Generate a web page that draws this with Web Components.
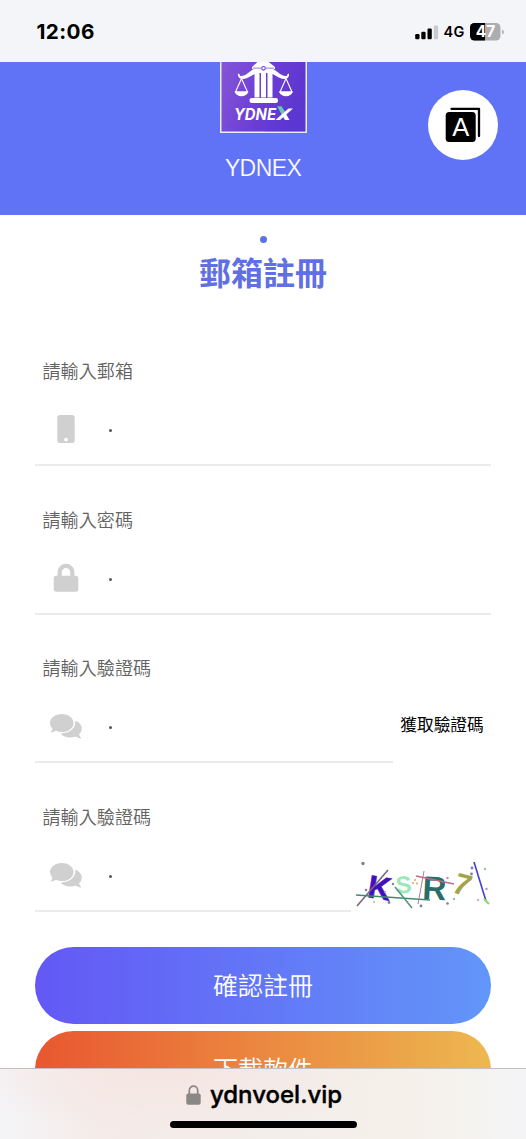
<!DOCTYPE html>
<html lang="zh-Hant">
<head>
<meta charset="utf-8">
<title>YDNEX</title>
<style>
html,body{margin:0;height:100%;background:#fff}
body{overflow:hidden;font-family:"Liberation Sans","Noto Sans CJK TC",sans-serif}
</style>
</head>
<body>
<sign-up-page></sign-up-page>
<script>
const define = (name, html) => customElements.define(name, class extends HTMLElement {
  constructor() {
    super();
    const t = document.createElement('template');
    t.innerHTML = html;
    this.attachShadow({mode: 'open'}).append(t.content.cloneNode(true));
  }
});

define('status-bar', `
<style>
:host{display:flex;box-sizing:border-box;height:62px;flex:none;background:#f4f5f9;align-items:center;justify-content:space-between;padding:1px 22.500px 0 36.500px;font-family:Inter,sans-serif;color:#000}
.time{font-size:20.700px;font-weight:700;letter-spacing:.4px}
.right{display:flex;align-items:center}
.net{font-size:14.5px;font-weight:600;margin:1px 5px 0 5px;line-height:18px;letter-spacing:.2px}
svg{display:block}
</style>
<span class="time">12:06</span>
<div class="right">
<svg width="25" height="16" viewBox="0 0 25 16"><g fill="#000"><rect x="1.2" y="10" width="4.300" height="5.3" rx="1.2"/><rect x="7.3" y="7.7" width="4.300" height="7.6" rx="1.2"/><rect x="13.5" y="4.500" width="4.300" height="10.8" rx="1.2"/></g><rect x="19.800" y="1.500" width="4.300" height="13.8" rx="1.2" fill="#c9cacd"/></svg>
<span class="net">4G</span>
<svg width="34" height="18" viewBox="0 0 34 18"><defs><clipPath id="b"><rect x="0" y="0" width="30.5" height="17.5" rx="4.5"/></clipPath></defs><g clip-path="url(#b)"><rect width="31" height="18" fill="#adadaf"/><rect width="15" height="18" fill="#000"/></g><path d="M32 6.5q2 .5 2 2.5t-2 2.5z" fill="#b4b4b7"/><text x="15.5" y="14.4" text-anchor="middle" font-family="Inter" font-weight="700" font-size="15.500" fill="#fff">47</text></svg>
</div>`);

define('brand-logo', `
<style>:host{display:block;width:87px;height:71px}svg{display:block}</style>
<svg width="87" height="71" viewBox="0 .500 87 71">
<defs><linearGradient id="g" x1="0" x2="1" y1=".2" y2=".5"><stop offset="0" stop-color="#8354d7"/><stop offset=".55" stop-color="#6b3dd5"/><stop offset="1" stop-color="#5b35cf"/></linearGradient></defs>
<path d="M.75 0V70.75H86.25V0" fill="url(#g)" stroke="#eeeafe" stroke-width="1.5"/>
<path d="M55 49L68 46L85 45V70H45z" fill="#5b39d8" opacity=".35"/>
<g fill="#fff"><path d="M38 0H48L55 5.500V7.500Q43.500 8.500 32 7.500V5.500Z"/>
<path d="M34.500 11h5v25h-5zM41 11h5v25h-5zM47.500 11h5v25h-5z"/>
<rect x="29.500" y="36.500" width="28.500" height="5" rx="2.200"/>
<path d="M37 7C30 7 28 15 20 14.500Q20 12 18.300 12Q17 14.500 20 17C28 19 31 12.500 38 11.500H49C56 12.500 59 19 67 17Q70 14.500 68.700 12Q67 12 67 14.500C59 15 57 7 50 7Z"/>
<path d="M14.500 30H28.500Q26.500 34.800 21.500 34.800T14.500 30ZM58.800 30H72.800Q71 34.800 66 34.800T58.800 30Z"/></g>
<g fill="none" stroke="#fff" stroke-width="1.100"><path d="M21.500 17L15.500 30.500H27.500ZM66 17L60 30.500H72Z"/></g>
<path d="M33 6.600h8M46 6.600h8" stroke="#6b3dd5" stroke-width=".7"/>
<circle cx="43.500" cy="6.800" r="1.800" fill="#fff" stroke="#6b3dd5" stroke-width="1.100"/>
<text x="14" y="58.500" font-family="Inter" font-style="italic" font-weight="700" font-size="16" textLength="42" lengthAdjust="spacingAndGlyphs" fill="#fff">YDNE</text>
<path d="M57 44.800h4.500l4.500 7l-3.500 2.700z" fill="#65c9b0"/><path d="M61.500 53l3.500 5.500h4.500L65.300 51z" fill="#fff"/><path d="M55.500 58.500L68.500 47H73L60 58.500Z" fill="#fff"/>
</svg>`);

define('language-button', `
<style>:host{display:flex;width:70px;height:70px;border-radius:50%;background:#fff;align-items:center;justify-content:center}svg{display:block;margin-right:1px}</style>
<svg width="36" height="36" viewBox="0 0 36 36"><path d="M6.500 1.800H34V29" fill="none" stroke="#000" stroke-width="2.300" stroke-linejoin="round" stroke-linecap="round"/><rect x=".7" y="5" width="30" height="30" rx="3.500"/><text x="15.700" y="28.800" text-anchor="middle" font-family="Liberation Sans" font-size="25.500" fill="#fff">A</text></svg>`);

define('site-header', `
<style>
:host{display:flex;flex-direction:column;align-items:center;height:152.5px;background:#6072f5;position:relative;flex:none;box-sizing:border-box;color:#fff}
.name{margin-top:21px;font-size:23px;line-height:28px;letter-spacing:-.6px;-webkit-text-stroke:.2px #6072f5}
language-button{position:absolute;right:28px;top:28px}
</style>
<brand-logo></brand-logo><div class="name"><slot></slot></div><language-button></language-button>`);

define('page-title', `
<style>
:host{display:flex;flex-direction:column;align-items:center;height:102.3px;flex:none;color:#6070e4}
i{width:7px;height:7px;border-radius:50%;background:currentColor;margin-top:21px}
h1{margin:4.500px 0 0;font-size:32px;line-height:48px;font-weight:700;font-family:"Noto Sans CJK TC",sans-serif}
</style>
<i></i><h1><slot></slot></h1>`);

const icons = {
 phone: '<path fill-rule="evenodd" d="M10.800 1h12.400q2.500 0 2.500 2.500v23q0 2.500-2.500 2.500h-12.400q-2.500 0-2.500-2.500v-23q0-2.500 2.500-2.500zM17 23.700a1.900 1.900 0 1 0 0 3.800a1.900 1.900 0 1 0 0-3.800z"/>',
 lock: '<path fill-rule="evenodd" d="M8.500 12.700V9.200a8.500 8.500 0 0 1 17 0V12.700h1.300q2.500 0 2.500 2.500v11q0 2.500-2.500 2.500H7.200q-2.500 0-2.500-2.500v-11q0-2.500 2.500-2.500zm4.300 0h8.400V9.200a4.200 4.200 0 0 0-8.400 0z"/>',
 chat: '<path d="M1 12.300C1 7.100 6.200 3.100 12.800 3.100S24.500 7.100 24.500 12.300S19.300 21.100 12.800 21.100Q9.500 21.100 7 19.800Q4.500 21.500 1.300 21.500Q3 19.700 3.500 17.700Q1 15.400 1 12.300Z"/><path d="M26.200 9.800C30 10.900 32.800 13.900 32.800 17.500Q32.800 21 30 23.300Q30.600 25.500 32.500 27.500Q29.200 27.500 26.800 25.500Q24.500 26.500 21.500 26.500C17 26.500 13.500 25 11.700 22.400C20 22.700 27.500 17 26.200 9.800Z"/>'
};
customElements.define('form-field', class extends HTMLElement {
  constructor() {
    super();
    this.attachShadow({mode: 'open'}).innerHTML = `
<style>
:host{display:block;box-sizing:border-box;height:148.7px;padding-top:39.100px}
.label{padding-left:7.500px;font:350 18px/28px "Noto Sans CJK TC",sans-serif;color:#626262;letter-spacing:.1px}
.row{display:flex;height:82px}
.input{display:flex;flex:1;box-sizing:border-box;padding:10px 0 0 14px;align-items:center;border-bottom:2px solid #ebebed}
svg{display:block;fill:#d0d0d0}
.caret{width:3px;height:3px;border-radius:50%;background:#555;margin:3px 0 0 25.500px}
</style>
<div class="label">${this.getAttribute('label')}</div>
<div class="row"><div class="input"><svg width="34" height="30" viewBox="0 0 34 30">${icons[this.getAttribute('icon')]}</svg><span class="caret"></span></div><slot></slot></div>`;
  }
});

define('code-link', `
<style>:host{display:flex;width:98px;box-sizing:border-box;height:80px;justify-content:center;padding-top:29.500px;font:400 16.700px/26px "Noto Sans CJK TC",sans-serif;color:#000}</style><slot></slot>`);

define('captcha-image', `
<style>:host{display:block;width:140px;height:80px;padding-top:1px}svg{display:block}</style>
<svg width="140" height="80" viewBox="351 832 140 80" font-family="Liberation Sans" font-weight="700">
<text transform="translate(366.500 898) rotate(9)" font-size="32" fill="#4210bb" stroke="#4210bb" stroke-width=".6">K</text>
<text transform="translate(396 894.500) rotate(-3)" font-size="24" fill="#9be9b4">S</text>
<text transform="translate(422 900) rotate(3)" font-size="33" fill="#286d68">R</text>
<text transform="translate(450.500 893) rotate(15) skewX(-6)" font-size="30" fill="#a1a548">7</text>
<g fill="none" stroke-width="1.600"><path d="M388 871L357 907" stroke="#776784"/><path d="M356 896L430 901" stroke="#408b70"/><path d="M395 888L412 909" stroke="#55967d"/><path d="M416 877L454 885" stroke="#bf6b8d"/><path d="M424 872L418 905" stroke="#a87d9b" stroke-width="1"/><path d="M474 863L486 902" stroke="#423fd6"/><path d="M484 900L489 905" stroke="#89dd70" stroke-width="2.200"/></g>
<g fill="#8b77a0"><circle cx="363" cy="864.500" r="1.700"/><circle cx="366" cy="891" r="1.300"/><circle cx="389" cy="903.500" r="1.400"/><circle cx="393" cy="885" r="1.200"/><circle cx="421" cy="907" r="1.400"/><circle cx="447.500" cy="904.500" r="1.300"/><circle cx="472" cy="869" r="1.400"/><circle cx="471.500" cy="875" r="1.400"/></g>
<g fill="#c78cab"><circle cx="447.500" cy="879" r="1.200"/><circle cx="486.500" cy="890" r="1.200"/><circle cx="478" cy="901" r="1"/><circle cx="385" cy="893" r="1"/></g><g fill="#dfa45b"><circle cx="413" cy="884" r="1"/><circle cx="417" cy="884.500" r="1"/><circle cx="415" cy="881" r="1"/></g><g fill="#8ecb9b"><circle cx="485" cy="870" r="1.200"/><circle cx="454" cy="900" r="1.200"/><circle cx="374" cy="903" r="1"/></g>
</svg>`);

define('pill-button', `
<style>:host{display:flex;height:76.700px;border-radius:39px;align-items:center;justify-content:center;color:#fff;font:350 25px/36px "Noto Sans CJK TC",sans-serif;background:linear-gradient(90deg,var(--from),var(--to))}span{margin-bottom:3px}</style><span><slot></slot></span>`);

define('address-bar', `
<style>
:host{display:flex;flex-direction:column;align-items:center;box-sizing:border-box;height:71px;flex:none;border-top:1px solid #c5c0bf;background:radial-gradient(ellipse 210px 65px at 165px 0,#f5e5e2 0,#f5e5e200 100%),linear-gradient(90deg,#f4f4f7 0,#f5ebe8 20%,#f3eeea 50%,#f5f0e9 78%,#f4f4f6 100%)}
.url{display:flex;align-items:center;margin:9px 0 0 2px;height:34px;font:500 24px/34px Inter,sans-serif;color:#000;letter-spacing:0;-webkit-text-stroke:.4px #000}
svg{display:block;margin:-1px 9px 0 0}
.home{width:187px;height:7px;border-radius:4px;background:#000;margin-top:8.500px}
</style>
<div class="url"><svg width="15" height="20" viewBox="0 0 15 20"><path d="M3.300 9V5.400a4.200 4.200 0 0 1 8.400 0V9" fill="none" stroke="#8b8785" stroke-width="1.700"/><rect x=".3" y="8.500" width="14.400" height="11.300" rx="2" fill="#8b8785"/></svg><span>ydnvoel.vip</span></div><div class="home"></div>`);

define('sign-up-page', `
<style>
:host{display:flex;flex-direction:column;width:526px;height:1139px;overflow:hidden;background:#fff}
main{flex:1;min-height:0;overflow:hidden}
form{padding:0 35px}
.actions{display:flex;flex-direction:column;gap:7.300px;margin-top:35.400px}
</style>
<status-bar></status-bar>
<main>
<site-header>YDNEX</site-header>
<page-title>郵箱註冊</page-title>
<form>
<form-field label="請輸入郵箱" icon="phone"></form-field>
<form-field label="請輸入密碼" icon="lock"></form-field>
<form-field label="請輸入驗證碼" icon="chat"><code-link>獲取驗證碼</code-link></form-field>
<form-field label="請輸入驗證碼" icon="chat"><captcha-image></captcha-image></form-field>
<div class="actions"><pill-button style="--from:#6358f5;--to:#6296f9">確認註冊</pill-button><pill-button style="--from:#e95730;--to:#edb850">下載軟件</pill-button></div>
</form>
</main>
<address-bar></address-bar>`);
</script>
</body>
</html>
